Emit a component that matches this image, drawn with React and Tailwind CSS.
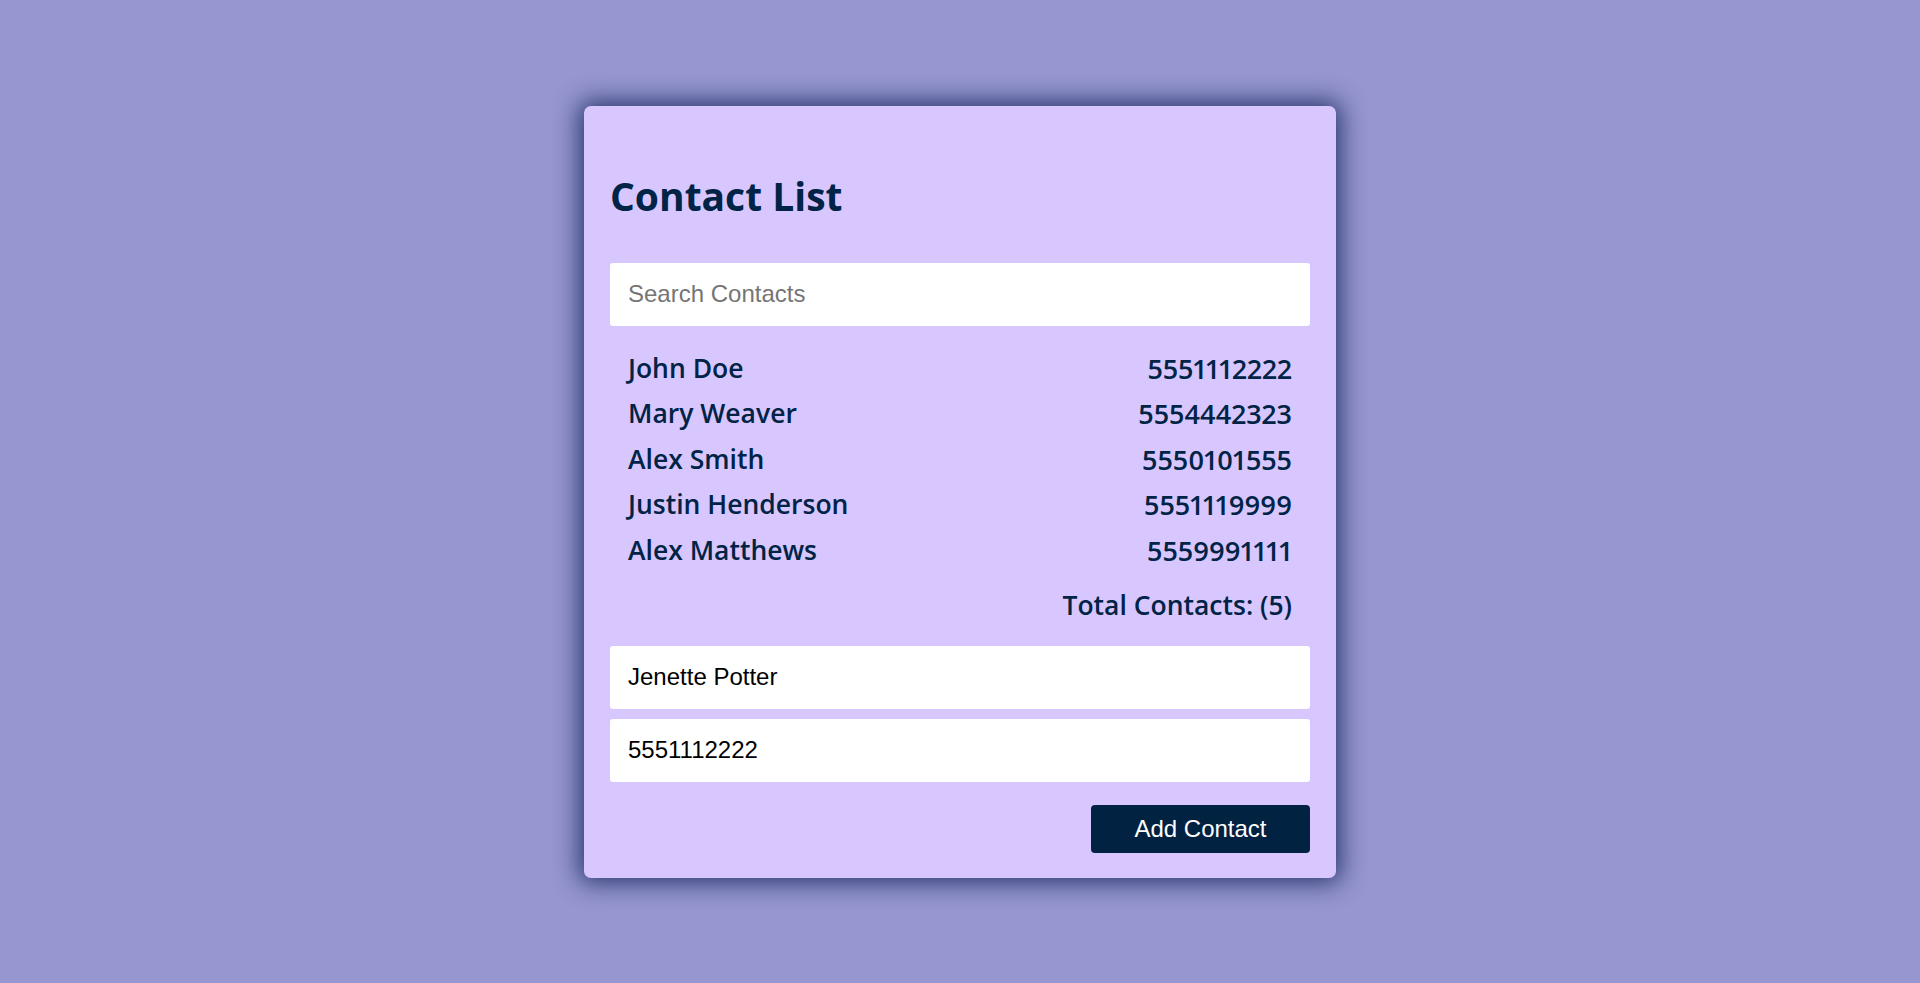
import React, { useState } from 'react';

const contacts = [
  { name: 'John Doe', phone: '5551112222' },
  { name: 'Mary Weaver', phone: '5554442323' },
  { name: 'Alex Smith', phone: '5550101555' },
  { name: 'Justin Henderson', phone: '5551119999' },
  { name: 'Alex Matthews', phone: '5559991111' },
];

const App = () => {
  const [search, setSearch] = useState('');
  const [name, setName] = useState('Jenette Potter');
  const [phone, setPhone] = useState('5551112222');

  const inputClass =
    "w-full h-[63px] px-[18px] bg-white rounded-[3px] outline-none text-[24px] text-black placeholder:text-[#757575] font-['Liberation_Sans',Arial,sans-serif]";

  return (
    <div className="min-h-screen w-full flex items-center justify-center bg-[#9696d0]">
      <div className="w-[752px] bg-[#d8c6fe] rounded-[7px] px-[26px] pt-[65px] pb-[25px] shadow-[0_0_24px_5px_rgba(25,40,95,0.85)] font-['Open_Sans','Noto_Sans',sans-serif] text-[#002346]">
        <h1 className="text-[39px] leading-[50px] font-bold">Contact List</h1>

        <input
          className={`${inputClass} mt-[42px]`}
          placeholder="Search Contacts"
          value={search}
          onChange={(e) => setSearch(e.target.value)}
        />

        <ul className="mt-[20px] px-[18px] text-[26.5px] leading-[45.5px] font-semibold">
          {contacts.map((c) => (
            <li key={c.name} className="flex justify-between">
              <span>{c.name}</span>
              <span className="text-[27px] proportional-nums">{c.phone}</span>
            </li>
          ))}
        </ul>

        <div className="mt-[9.5px] px-[18px] text-right text-[26.5px] leading-[45.5px] font-semibold">
          Total Contacts: ({contacts.length})
        </div>

        <div className="mt-[17.5px] flex flex-col gap-[10px]">
          <input className={inputClass} value={name} onChange={(e) => setName(e.target.value)} />
          <input className={inputClass} value={phone} onChange={(e) => setPhone(e.target.value)} />
        </div>

        <div className="mt-[23px] flex justify-end">
          <button className="w-[219px] h-[48px] rounded-[4px] bg-[#012241] text-white text-[24px] font-['Liberation_Sans',Arial,sans-serif]">
            Add Contact
          </button>
        </div>
      </div>
    </div>
  );
};

export default App;
